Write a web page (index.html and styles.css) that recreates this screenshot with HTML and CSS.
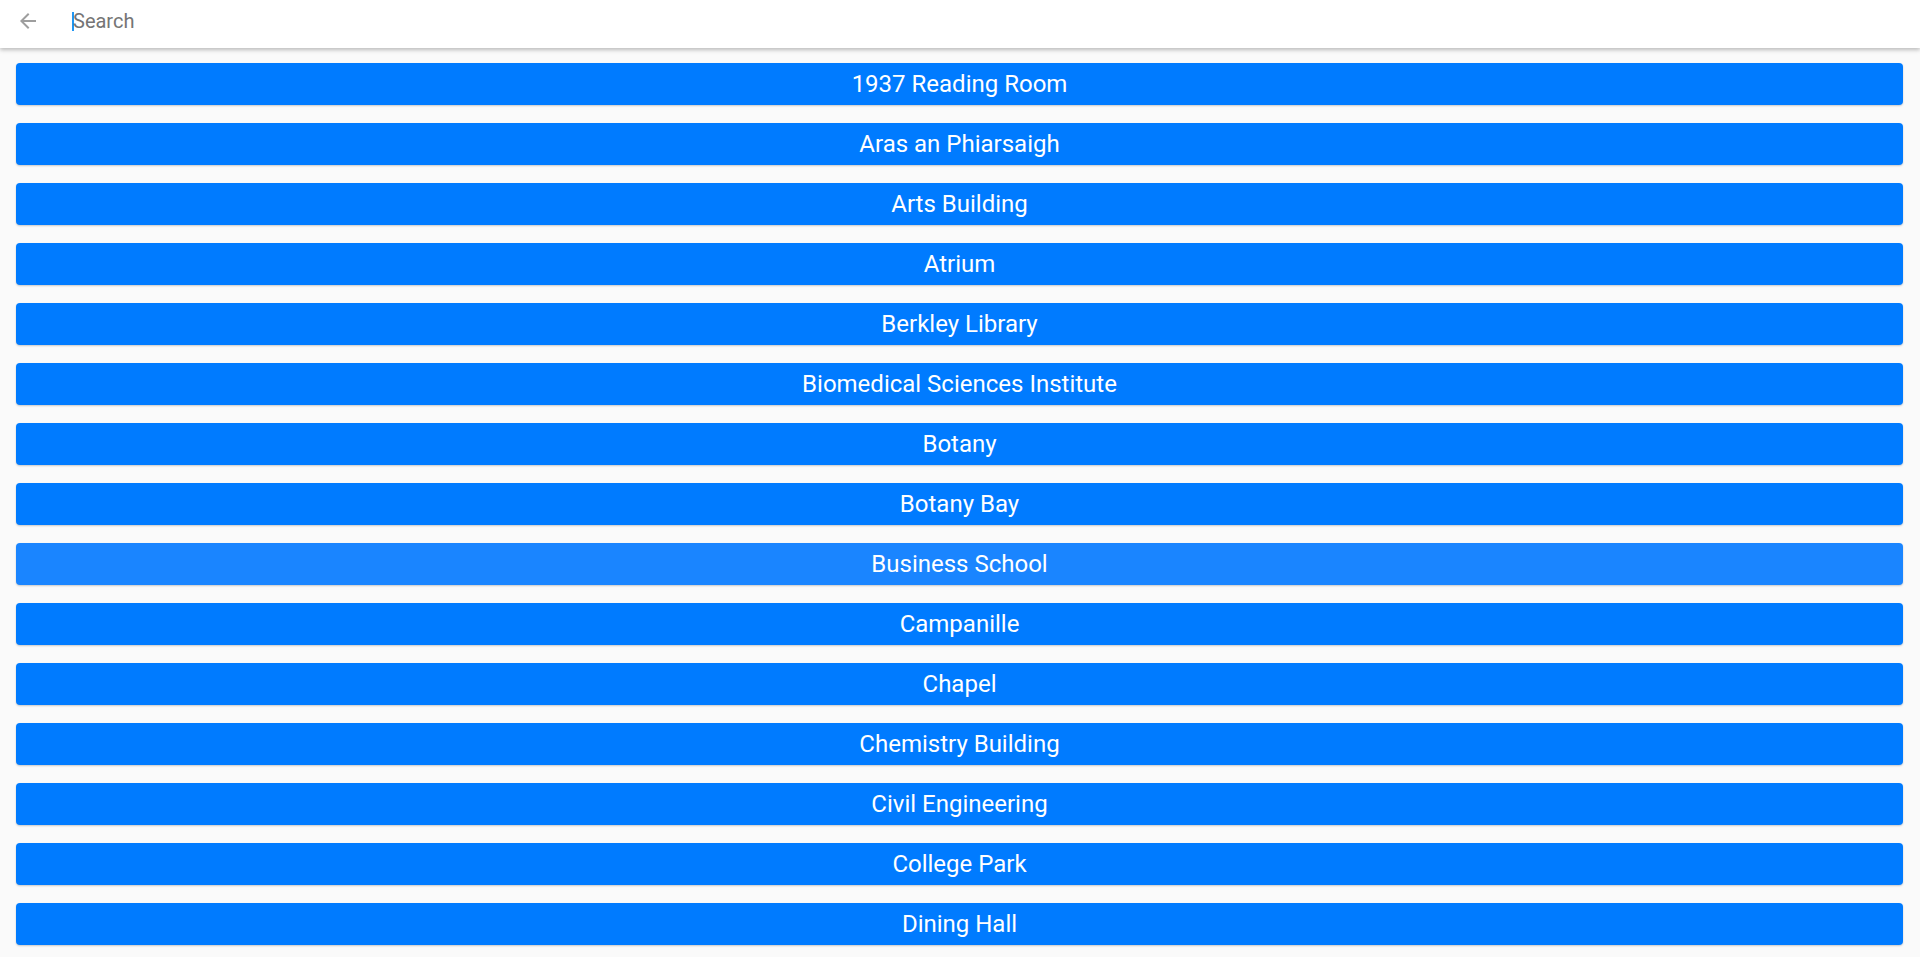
FILE: index.html
```html
<!DOCTYPE html>
<html lang="en">
<head>
<meta charset="utf-8">
<title>Search</title>
<link rel="stylesheet" href="styles.css">
</head>
<body>
<header class="toolbar">
  <button class="back" aria-label="Back">
    <svg viewBox="0 0 24 24" width="24" height="24"><path d="M20 11H7.83l5.59-5.59L12 4l-8 8 8 8 1.41-1.41L7.83 13H20v-2z" fill="currentColor"/></svg>
  </button>
  <div class="search"><span class="caret"></span><span class="placeholder">Search</span></div>
</header>
<main class="list">
  <button class="item">1937 Reading Room</button>
  <button class="item">Aras an Phiarsaigh</button>
  <button class="item">Arts Building</button>
  <button class="item">Atrium</button>
  <button class="item">Berkley Library</button>
  <button class="item">Biomedical Sciences Institute</button>
  <button class="item">Botany</button>
  <button class="item">Botany Bay</button>
  <button class="item hover">Business School</button>
  <button class="item">Campanille</button>
  <button class="item">Chapel</button>
  <button class="item">Chemistry Building</button>
  <button class="item">Civil Engineering</button>
  <button class="item">College Park</button>
  <button class="item">Dining Hall</button>
</main>
</body>
</html>
```
FILE: styles.css
```css
html, body {
  margin: 0;
  padding: 0;
  background: #fafafa;
  font-family: Roboto, "Liberation Sans", sans-serif;
}
.toolbar {
  height: 48px;
  background: #ffffff;
  display: flex;
  align-items: center;
  box-shadow: 0 2px 4px rgba(0,0,0,0.25);
  position: relative;
  z-index: 1;
}
.back {
  border: 0;
  background: none;
  padding: 0;
  margin: 0 0 0 16px;
  width: 24px;
  height: 24px;
  color: #9e9e9e;
  display: flex;
  margin-top: -6px;
}
.search {
  margin-left: 32px;
  display: flex;
  align-items: center;
  height: 24px;
  margin-top: -6px;
}
.caret {
  width: 2px;
  height: 19px;
  background: #2196f3;
}
.placeholder {
  font-size: 20px;
  color: #757575;
  margin-left: -1px;
}
.list {
  display: flex;
  flex-direction: column;
  gap: 18px;
  padding: 15px 17px 15px 16px;
}
.item {
  height: 42px;
  border: 0;
  border-radius: 4px;
  background: #007bff;
  color: #ffffff;
  font-family: Roboto, "Liberation Sans", sans-serif;
  font-size: 24px;
  box-shadow: 0 1px 2px rgba(0,0,0,0.2);
  padding: 0;
}
.item.hover {
  background: #1a85ff;
}
```
